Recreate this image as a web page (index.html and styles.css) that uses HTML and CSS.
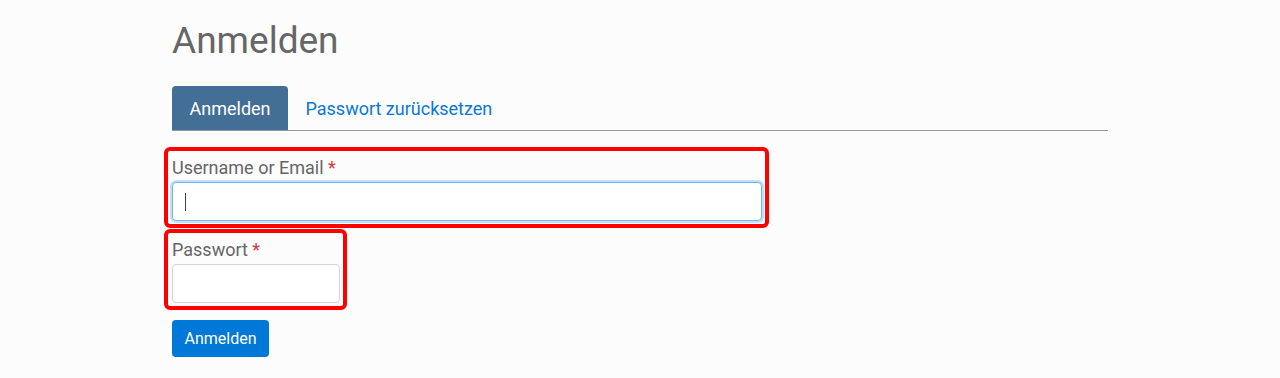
FILE: index.html
```html
<!DOCTYPE html>
<html lang="de">
<head>
    <meta charset="UTF-8">
    <title>Anmelden</title>
    <link rel="stylesheet" href="styles.css">
</head>
<body>
    <div class="page">
        <h1>Anmelden</h1>

        <ul class="tabs">
            <li class="tab active"><a href="#">Anmelden</a></li>
            <li class="tab"><a href="#">Passwort zurücksetzen</a></li>
        </ul>

        <form class="login-form" onsubmit="return false">
            <div class="form-group marked wide">
                <label for="username">Username or Email <span class="required">*</span></label>
                <div class="field">
                    <input type="text" id="username" class="form-control is-focused">
                    <span class="caret"></span>
                </div>
            </div>

            <div class="form-group marked narrow">
                <label for="password">Passwort <span class="required">*</span></label>
                <div class="field">
                    <input type="password" id="password" class="form-control">
                </div>
            </div>

            <button type="submit" class="btn-primary">Anmelden</button>
        </form>
    </div>
</body>
</html>
```

FILE: styles.css
```css
body {
    margin: 0;
    background: #fcfcfc;
    font-family: Roboto, "Liberation Sans", Arial, sans-serif;
    color: #666;
}
.page {
    max-width: 936px;
    margin: 0 auto;
    padding-top: 18px;
}
h1 {
    margin: 0 0 22px;
    font-size: 37px;
    font-weight: 400;
    line-height: 46px;
    color: #666;
}
.tabs {
    display: flex;
    list-style: none;
    margin: 0;
    padding: 0;
    border-bottom: 1px solid #999;
}
.tab a {
    display: block;
    padding: 9px 17.5px 8px;
    font-size: 18px;
    line-height: 27px;
    color: #0a78d4;
    text-decoration: none;
    border-radius: 4px 4px 0 0;
}
.tab.active a {
    background: #436f97;
    color: #fff;
}
.login-form {
    display: flex;
    flex-direction: column;
    align-items: flex-start;
    padding-top: 16px;
}
.form-group {
    display: flex;
    flex-direction: column;
}
.marked {
    margin-left: -8px;
    padding: 4px 3px 3px 4px;
    border: 4px solid #ff0000;
    border-radius: 6px;
}
.marked + .marked {
    margin-top: 1px;
}
.wide .form-control {
    width: 590px;
}
.narrow .form-control {
    width: 168px;
}
label {
    font-size: 18px;
    line-height: 25px;
    margin-bottom: 2px;
    color: #666;
}
.required {
    color: #d9343f;
}
.field {
    position: relative;
}
.form-control {
    display: block;
    box-sizing: border-box;
    height: 39px;
    padding: 6px 12px;
    font-size: 16px;
    font-family: inherit;
    background: #fff;
    border: 1px solid #d4d4d4;
    border-radius: 4px;
    outline: none;
}
.form-control.is-focused {
    border-color: #74b3ee;
    box-shadow: 0 0 0 2px #c4e0f8;
}
.caret {
    position: absolute;
    left: 13px;
    top: 11px;
    width: 1px;
    height: 18px;
    background: #444;
}
.btn-primary {
    margin-top: 10px;
    height: 37px;
    padding: 0 12.5px;
    font-family: inherit;
    font-size: 16px;
    color: #fff;
    background: #0078d7;
    border: none;
    border-radius: 4px;
    cursor: pointer;
}
```
